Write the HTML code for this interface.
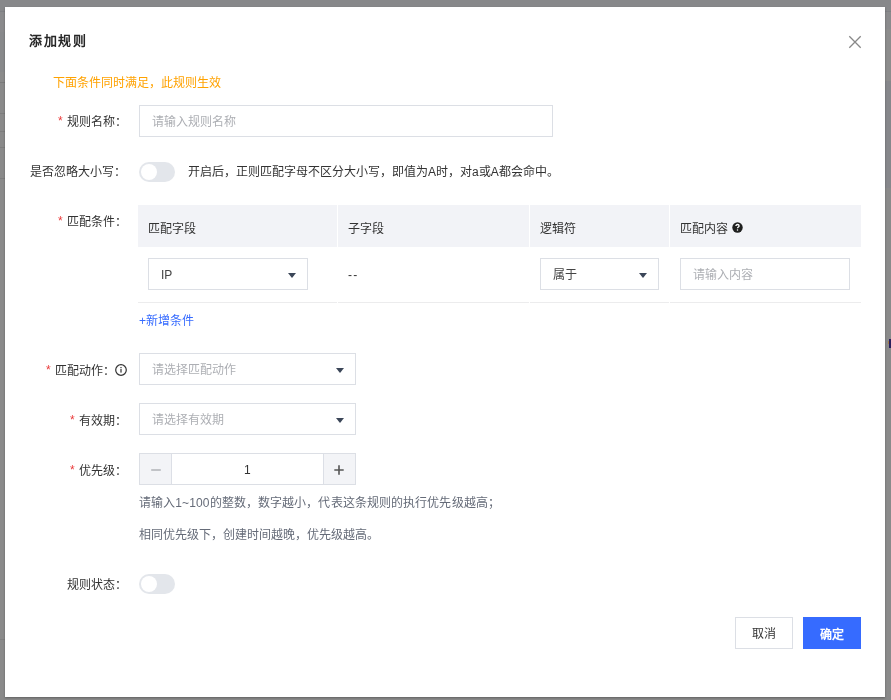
<!DOCTYPE html>
<html lang="zh-CN">
<head>
<meta charset="utf-8">
<style>
*{box-sizing:border-box;margin:0;padding:0}
html,body{width:891px;height:700px;overflow:hidden}
body{position:relative;background:#8a8a8a;font-family:"Liberation Sans",sans-serif;font-size:12px;color:#333}
.abs{position:absolute}
.dlg{left:5px;top:7px;width:880px;height:690px;background:#fff;box-shadow:0 1px 2px rgba(0,0,0,.3)}
.t{position:absolute;white-space:nowrap;line-height:16px;margin-top:1px}
.lbl{color:#333}
.t.req{color:#ea3a3a;margin-top:0;margin-left:1px}
.box{position:absolute;border:1px solid #dcdfe5;background:#fff}
.ph{color:#adafb4}
.caret{position:absolute;width:0;height:0;border-left:4px solid transparent;border-right:4px solid transparent;border-top:5px solid #3b4658}
.sw{position:absolute;width:36px;height:20px;border-radius:10px;background:#e3e6eb}
.sw i{position:absolute;left:2px;top:2px;width:16px;height:16px;border-radius:8px;background:#fff}
</style>
</head>
<body><div id="root" style="position:absolute;left:0;top:0;width:891px;height:700px;will-change:transform">
<div class="abs" style="left:0;top:0;width:891px;height:11px;background:#87888a"></div>
<div class="abs" style="left:0;top:11px;width:891px;height:1px;background:#7f8084"></div>
<div class="abs" style="left:0;top:12px;width:891px;height:20px;background:#8a8a8c"></div>
<div class="abs" style="left:0;top:32px;width:445px;height:40px;background:#88898b"></div>
<div class="abs" style="left:0;top:72px;width:445px;height:10px;background:#8b8b8b"></div>
<div class="abs" style="left:445px;top:29px;width:446px;height:52px;background:#8c8c8c"></div>
<div class="abs" style="left:445px;top:81px;width:446px;height:107px;background:#86878b"></div>
<div class="abs" style="left:0;top:82px;width:445px;height:1px;background:#7c7c7c"></div>
<div class="abs" style="left:0;top:113px;width:445px;height:1px;background:#7e7e7e"></div>
<div class="abs" style="left:0;top:131px;width:445px;height:1px;background:#7e7e7e"></div>
<div class="abs" style="left:0;top:147px;width:445px;height:1px;background:#7e7e7e"></div>
<div class="abs" style="left:0;top:178px;width:445px;height:1px;background:#7e7e7e"></div>
<div class="abs" style="left:0;top:639px;width:445px;height:1px;background:#808080"></div>
<div class="abs dlg"></div>

<!-- title -->
<div class="t" style="left:29px;top:32px;font-size:13px;font-weight:bold;letter-spacing:1.5px;color:#262626">添加规则</div>
<svg class="abs" style="left:848px;top:35.4px" width="14" height="14" viewBox="0 0 14 14"><path d="M1.3 1.3L12.7 12.7M12.7 1.3L1.3 12.7" stroke="#888" stroke-width="1.3"/></svg>

<div class="t" style="left:53px;top:74px;color:#ffa200">下面条件同时满足，此规则生效</div>

<!-- rule name -->
<div class="t req" style="left:57px;top:113px">*</div>
<div class="t lbl" style="left:67px;top:113px">规则名称：</div>
<div class="box" style="left:139px;top:105px;width:414px;height:32px"></div>
<div class="t ph" style="left:152px;top:113px">请输入规则名称</div>

<!-- ignore case -->
<div class="t lbl" style="left:30px;top:163px">是否忽略大小写：</div>
<div class="sw" style="left:139px;top:162px"><i></i></div>
<div class="t lbl" style="left:188px;top:163px">开启后，正则匹配字母不区分大小写，即值为A时，对a或A都会命中。</div>

<!-- match conditions -->
<div class="t req" style="left:57px;top:213px">*</div>
<div class="t lbl" style="left:67px;top:213px">匹配条件：</div>
<div class="abs" style="left:138px;top:205px;width:723px;height:42px;background:#f2f3f7"></div>
<div class="abs" style="left:337px;top:205px;width:1px;height:42px;background:#fff"></div>
<div class="abs" style="left:529px;top:205px;width:1px;height:42px;background:#fff"></div>
<div class="abs" style="left:669px;top:205px;width:1px;height:42px;background:#fff"></div>
<div class="t lbl" style="left:148px;top:220px">匹配字段</div>
<div class="t lbl" style="left:348px;top:220px">子字段</div>
<div class="t lbl" style="left:540px;top:220px">逻辑符</div>
<div class="t lbl" style="left:680px;top:220px">匹配内容</div>
<svg class="abs" style="left:731px;top:221px" width="13" height="13" viewBox="0 0 13 13"><circle cx="6.5" cy="6.5" r="5.2" fill="#1f1f1f"/><path d="M4.9 5.1C4.9 4.1 5.6 3.5 6.5 3.5C7.4 3.5 8.1 4.1 8.1 4.9C8.1 5.6 7.6 5.9 7.1 6.2C6.7 6.5 6.5 6.8 6.5 7.3" fill="none" stroke="#fff" stroke-width="1.3"/><circle cx="6.5" cy="9" r="0.75" fill="#fff"/></svg>

<div class="box" style="left:148px;top:258px;width:160px;height:32px"></div>
<div class="t" style="left:161px;top:266px;color:#444">IP</div>
<div class="caret" style="left:288px;top:273px"></div>
<div class="t lbl" style="left:348px;top:266px;letter-spacing:1.3px">--</div>
<div class="box" style="left:540px;top:258px;width:119px;height:32px"></div>
<div class="t" style="left:553px;top:266px;color:#444">属于</div>
<div class="caret" style="left:639px;top:273px"></div>
<div class="box" style="left:680px;top:258px;width:170px;height:32px"></div>
<div class="t ph" style="left:693px;top:266px">请输入内容</div>
<div class="abs" style="left:138px;top:302px;width:723px;height:1px;background:#ececed"></div>
<div class="abs" style="left:337px;top:302px;width:1px;height:1px;background:#fff"></div>
<div class="abs" style="left:529px;top:302px;width:1px;height:1px;background:#fff"></div>
<div class="abs" style="left:669px;top:302px;width:1px;height:1px;background:#fff"></div>

<div class="t" style="left:139px;top:312px;color:#366bff">+新增条件</div>

<!-- action -->
<div class="t req" style="left:45px;top:362px">*</div>
<div class="t lbl" style="left:55px;top:362px">匹配动作：</div>
<svg class="abs" style="left:115px;top:364px" width="12" height="12" viewBox="0 0 12 12"><circle cx="6" cy="6" r="5.3" fill="none" stroke="#333" stroke-width="1.2"/><rect x="5.4" y="5" width="1.2" height="3.6" fill="#333"/><rect x="5.4" y="3" width="1.2" height="1.2" fill="#333"/></svg>
<div class="box" style="left:139px;top:353px;width:217px;height:32px"></div>
<div class="t ph" style="left:152px;top:361px">请选择匹配动作</div>
<div class="caret" style="left:336px;top:368px"></div>

<!-- validity -->
<div class="t req" style="left:69px;top:412px">*</div>
<div class="t lbl" style="left:79px;top:412px">有效期：</div>
<div class="box" style="left:139px;top:403px;width:217px;height:32px"></div>
<div class="t ph" style="left:152px;top:411px">请选择有效期</div>
<div class="caret" style="left:336px;top:418px"></div>

<!-- priority -->
<div class="t req" style="left:69px;top:462px">*</div>
<div class="t lbl" style="left:79px;top:462px">优先级：</div>
<div class="box" style="left:139px;top:453px;width:217px;height:32px"></div>
<div class="abs" style="left:140px;top:454px;width:32px;height:30px;background:#f3f4f7;border-right:1px solid #dcdfe6"></div>
<div class="abs" style="left:323px;top:454px;width:32px;height:30px;background:#f3f4f7;border-left:1px solid #dcdfe6"></div>
<svg class="abs" style="left:140px;top:454px" width="31" height="31"><path d="M11.2 16H20.8" stroke="#b9babf" stroke-width="1.7"/></svg>
<svg class="abs" style="left:324px;top:454px" width="31" height="31"><path d="M10.3 16H19.7M15 11.3V20.7" stroke="#555" stroke-width="1.6"/></svg>
<div class="t lbl" style="left:244px;top:461px">1</div>

<div class="t" style="left:139px;top:494px;color:#656b78;letter-spacing:0.1px">请输入1~100的整数，数字越小，代表这条规则的执行优先级越高；</div>
<div class="t" style="left:139px;top:526px;color:#656b78">相同优先级下，创建时间越晚，优先级越高。</div>

<!-- status -->
<div class="t lbl" style="left:67px;top:576px">规则状态：</div>
<div class="sw" style="left:139px;top:574px"><i></i></div>

<!-- footer -->
<div class="box" style="left:735px;top:617px;width:58px;height:32px"></div>
<div class="t" style="left:752px;top:625px;color:#333">取消</div>
<div class="abs" style="left:803px;top:617px;width:58px;height:32px;background:#366bff"></div>
<div class="t" style="left:820px;top:626px;color:#fff;font-weight:bold">确定</div>

<div class="abs" style="left:889px;top:339px;width:2px;height:9px;background:#2b1f5c"></div><div class="abs" style="left:888px;top:341px;width:1px;height:3px;background:#a57a48"></div>
</div></body>
</html>
